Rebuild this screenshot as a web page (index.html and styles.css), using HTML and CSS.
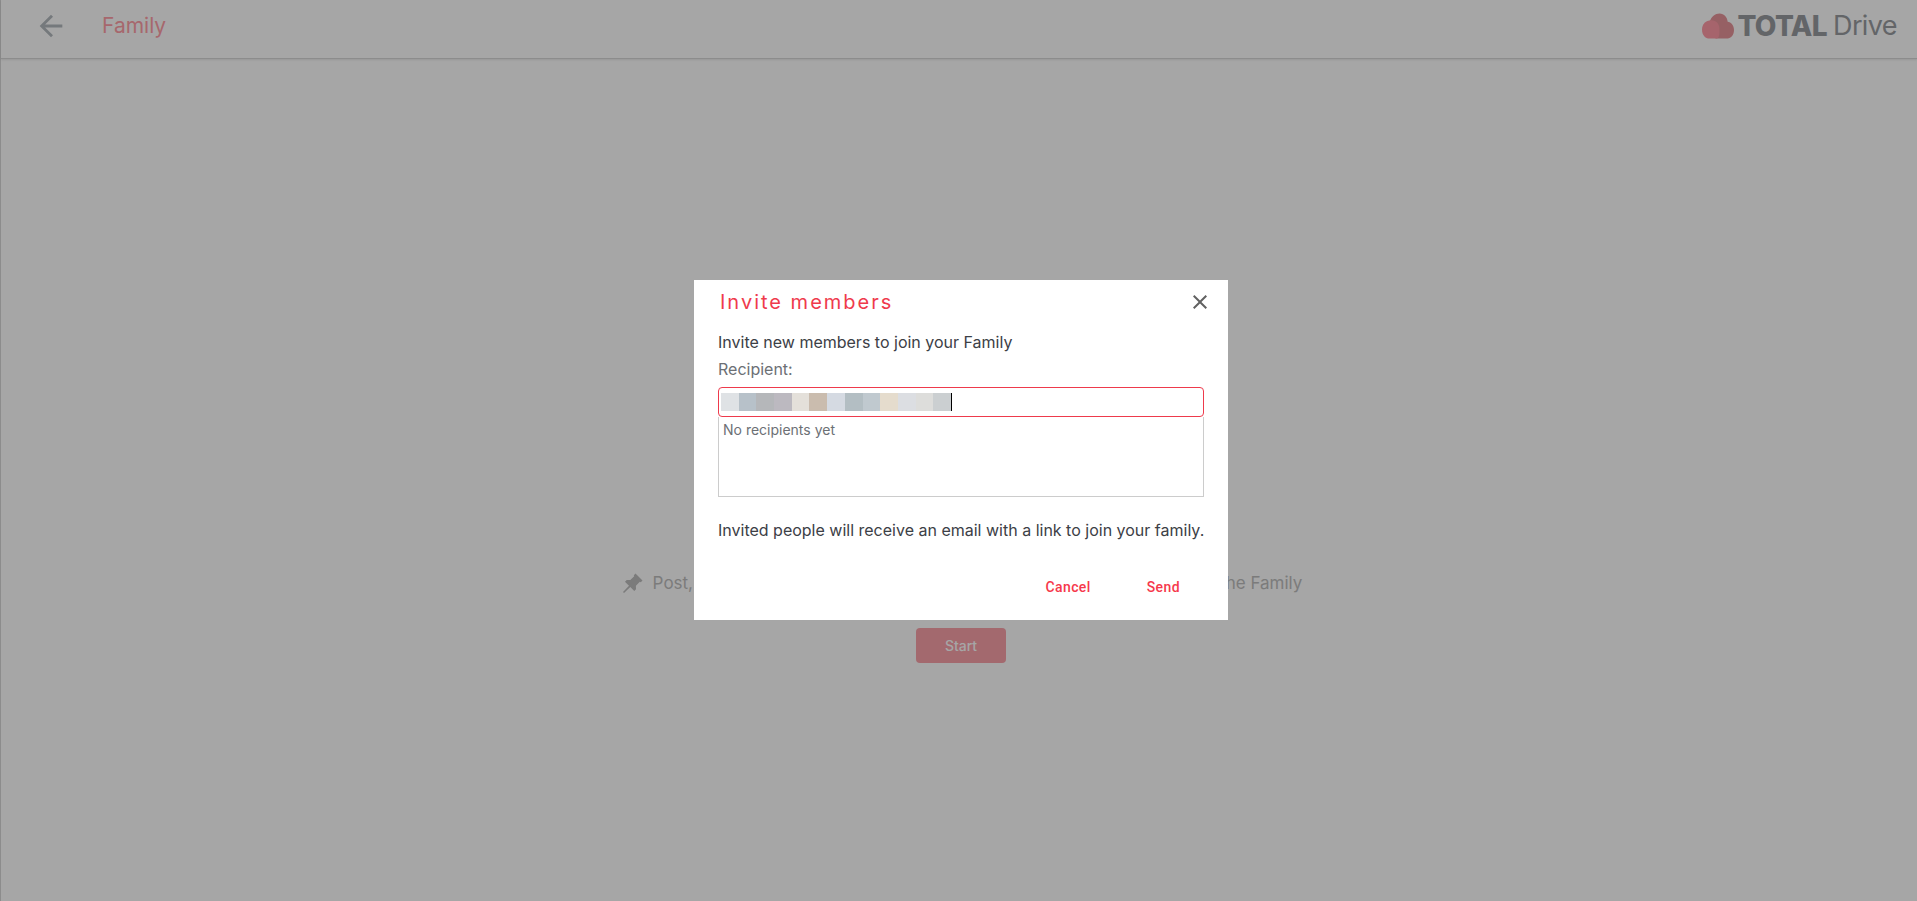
FILE: index.html
```html
<!DOCTYPE html>
<html lang="en">
<head>
<meta charset="utf-8">
<title>Family</title>
<link rel="stylesheet" href="styles.css">
</head>
<body>
<div class="page">
  <header class="topbar">
    <div class="topbar-left">
      <svg class="back" viewBox="0 0 24 24" width="34" height="34"><path d="M20 11H7.830l5.590-5.590L12 4l-8 8 8 8 1.410-1.410L7.830 13H20z"/></svg>
      <span class="page-title">Family</span>
    </div>
    <div class="brand">
      <svg class="brand-icon" viewBox="0 0 33 26" width="32" height="26">
        <path class="cloud-back" d="M8 9 C9 3 14 0 18 0 C23 0 26 4 26.500 8.500 C30 9 33 12 33 17 C33 22 30 26 25 26 L14 26 Z"/>
        <path class="cloud-front" d="M9.500 7 C15 7 18 11 18 16.500 C18 22 18 26 14 26 L8 26 C3 26 0 22 0 16.500 C0 11 4 7 9.500 7 Z"/>
      </svg>
      <span class="brand-bold">TOTAL</span><span class="brand-light">Drive</span>
    </div>
  </header>
  <main class="empty">
    <p class="empty-line">
      <svg class="pin" viewBox="0 0 24 24" width="24" height="24"><path d="M14.500 2.500 21.500 9.500 19.800 11.200 18.800 10.800 14.900 14.700 15 18.300 13.300 20 9.300 16 3 22 2 21 8 14.700 4 10.700 5.700 9 9.300 9.100 13.200 5.200 12.800 4.200z"/></svg>
      <span>Post, share and organize your photos, videos and key documents with the Family</span>
    </p>
    <button class="start" type="button">Start</button>
  </main>
</div>
<div class="overlay">
  <section class="dialog">
    <div class="dialog-head">
      <h2 class="dialog-title">Invite members</h2>
      <svg class="close" viewBox="0 0 24 24" width="24" height="24"><path d="M19 6.410 17.590 5 12 10.590 6.410 5 5 6.410 10.590 12 5 17.590 6.410 19 12 13.410 17.590 19 19 17.590 13.410 12z"/></svg>
    </div>
    <div class="dialog-body">
      <p class="intro">Invite new members to join your Family</p>
      <label class="label">Recipient:</label>
      <div class="input">
        <span class="redact">
          <i class="c1"></i><i class="c2"></i><i class="c3"></i><i class="c4"></i><i class="c5"></i><i class="c6"></i><i class="c7"></i><i class="c8"></i><i class="c9"></i><i class="c10"></i><i class="c11"></i><i class="c12"></i><i class="c13"></i>
        </span>
        <span class="caret"></span>
      </div>
      <div class="recipients">No recipients yet</div>
      <p class="note">Invited people will receive an email with a link to join your family.</p>
    </div>
    <div class="actions">
      <button class="text-btn" type="button">Cancel</button>
      <button class="text-btn" type="button">Send</button>
    </div>
  </section>
</div>
</body>
</html>
```

FILE: styles.css
```css
* { box-sizing: border-box; }
html, body { margin: 0; height: 100%; }
body { font-family: Inter, "Liberation Sans", sans-serif; background: #fff; overflow: hidden; }
.page { height: 901px; display: flex; flex-direction: column; border-left: 1px solid #d8d8d8; }
.topbar { height: 59px; flex: none; display: flex; justify-content: space-between; align-items: center; padding: 0 20px 7px 33px; border-bottom: 1px solid #d8d8d8; box-shadow: 0 1px 2px rgba(0,0,0,.1); }
.topbar-left { display: flex; align-items: center; gap: 34px; }
.back { fill: #b4babf; display: block; }
.page-title { font-size: 21px; color: #ff9fa8; }
.brand { display: flex; align-items: center; }
.brand-icon { margin-right: 3px; display: block; }
.cloud-back { fill: #e7949a; }
.cloud-front { fill: #ff9aa6; }
.brand-bold { font-size: 28px; font-weight: 800; color: #989ba0; letter-spacing: -.6px; }
.brand-light { font-size: 27px; font-weight: 400; color: #989ba0; margin-left: 6px; letter-spacing: -.6px; }
.empty { flex: 1; display: flex; flex-direction: column; align-items: center; padding: 509px 0 0 5px; }
.empty-line { display: flex; align-items: center; gap: 8px; margin: 0 0 30px; font-size: 17px; color: #bebebe; height: 30px; white-space: nowrap; }
.pin { fill: #bdbdbd; display: block; }
.start { width: 90px; height: 35px; margin-right: 1px; border: 0; border-radius: 4px; background: #f6394c; opacity: .47; color: #fff; font: 500 14px Inter, sans-serif; }
.overlay { position: fixed; inset: 0; background: rgba(0,0,0,.35); display: flex; align-items: center; justify-content: center; padding: 0 0 1px 5px; }
.dialog { width: 534px; height: 340px; background: #fff; display: flex; flex-direction: column; }
.dialog-head { display: flex; justify-content: space-between; align-items: center; height: 44px; padding: 0 16px 0 26px; }
.dialog-title { margin: 0; font-size: 20px; font-weight: 400; letter-spacing: 2px; color: #ef3a4c; }
.close { fill: #616161; display: block; }
.dialog-body { padding: 0 24px; flex: 1; }
.intro { margin: 5px 0 0; font-size: 16px; line-height: 26px; color: #3c4046; }
.label { display: block; margin-top: 1px; font-size: 16px; line-height: 26px; color: #6c7075; }
.input { height: 30px; margin-top: 5px; border: 1px solid #ee3a4c; border-radius: 4px; display: flex; align-items: center; padding-left: 2px; }
.redact { display: flex; height: 18px; }
.redact i { display: block; width: 17.700px; height: 18px; }
.c1 { background: #dfe2e5; } .c2 { background: #b7c1c9; } .c3 { background: #b5b7ba; } .c4 { background: #bcb9c0; }
.c5 { background: #e4e0da; } .c6 { background: #cabcae; } .c7 { background: #d5dae2; } .c8 { background: #b3bec3; }
.c9 { background: #c0c9cf; } .c10 { background: #e5dccd; } .c11 { background: #dcdee2; } .c12 { background: #dddddb; } .c13 { background: #cbcfd1; }
.caret { width: 1px; height: 18px; background: #000; }
.recipients { height: 80px; border: 1px solid #ccc; border-top: 0; padding: 4px 4px; font-size: 14px; line-height: 18px; color: #6c7075; }
.note { margin: 20px 0 0; font-size: 16px; line-height: 26px; color: #3c4046; white-space: nowrap; }
.actions { display: flex; justify-content: flex-end; padding: 0 20px 15px 0; }
.text-btn { background: none; border: 0; font: 500 14px Roboto, sans-serif; letter-spacing: .4px; color: #f6394c; padding: 0 28px; height: 36px; min-width: 64px; }
```
